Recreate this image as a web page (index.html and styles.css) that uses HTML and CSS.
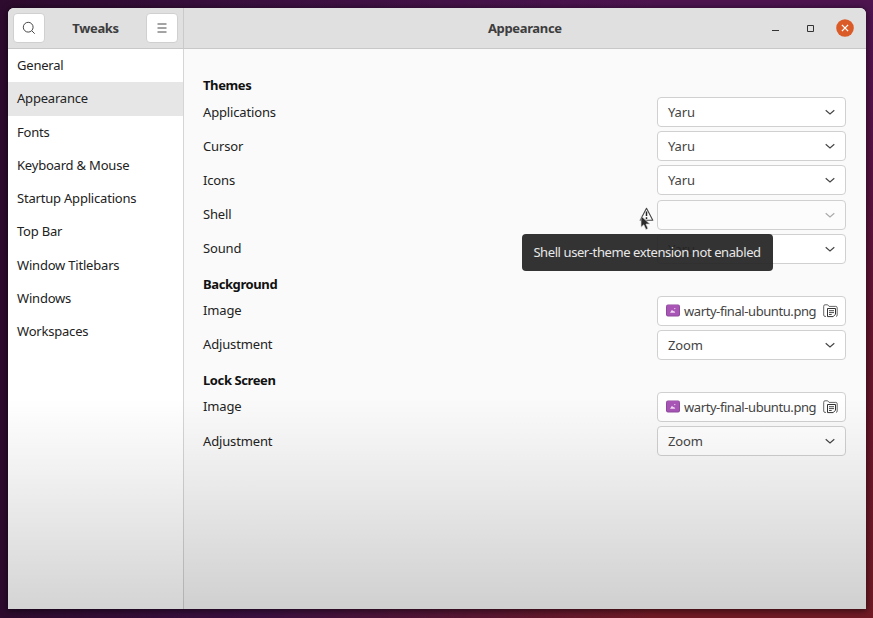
FILE: index.html
```html
<!DOCTYPE html>
<html lang="en">
<head>
<meta charset="utf-8">
<title>Tweaks</title>
<link rel="stylesheet" href="styles.css">
</head>
<body>
<svg class="defs" aria-hidden="true">
  <symbol id="chevron" viewBox="0 0 12 12"><path d="M1.7 4.3 6 8 10.3 4.3" fill="none" stroke="currentColor" stroke-width="1.15"/></symbol>
  <symbol id="picture" viewBox="0 0 14 13"><rect y=".5" width="14" height="12" rx="2" fill="#8d4a9e"/><rect x="1" y="1" width="12" height="10.5" rx="1.2" fill="#a855b5"/><path d="M4 8.8 6 5.8 7.2 7.3 8 6.7 9.3 8.8Z" fill="#f0d9f3"/><circle cx="8.8" cy="4.6" r=".7" fill="#f0d9f3"/></symbol>
  <symbol id="folder" viewBox="0 0 15 14"><path d="M3 12.4H2Q.7 12.4.7 11V2.2Q.7.8 2 .8H4.7L6 2.4H12.8Q14.2 2.4 14.2 3.8V11Q14.2 12.4 13 12.4" fill="none" stroke="#666" stroke-width="1"/><path d="M4.5 4.5H12.5V10.2L10.2 12.6H4.5Z" fill="#fff" stroke="#333" stroke-width="1"/><path d="M6 6.7H11M6 8.6H11M6 10.5H8.7" stroke="#333" stroke-width=".9"/></symbol>
</svg>
<div class="window">
  <header class="titlebar">
    <div class="titlebar-side">
      <button class="tool" aria-label="Search"><svg width="14" height="14" viewBox="0 0 14 14"><circle cx="6.2" cy="6.2" r="4.9"/><path d="m9.8 9.8 2.9 2.9"/></svg></button>
      <span class="title side-title">Tweaks</span>
      <button class="tool" aria-label="Menu"><svg width="14" height="14" viewBox="0 0 14 14"><path d="M2.5 3h9M2.5 7h9M2.5 11h9"/></svg></button>
    </div>
    <div class="titlebar-main">
      <span class="title main-title">Appearance</span>
      <div class="controls">
        <svg width="19" height="19" viewBox="0 0 19 19"><path d="M6 11.5h7" stroke="#333"/></svg>
        <svg width="19" height="19" viewBox="0 0 19 19"><path d="M6.5 6.5h6v6h-6z" fill="none" stroke="#333"/></svg>
        <svg width="18" height="18" viewBox="0 0 18 18"><circle cx="9" cy="9" r="8.8" fill="#db5b28"/><path d="m5.9 5.9 6.2 6.2m0-6.2-6.2 6.2" stroke="#fff" stroke-width="1.3"/></svg>
      </div>
    </div>
  </header>
  <div class="body">
    <nav class="sidebar">
      <a class="item">General</a>
      <a class="item active">Appearance</a>
      <a class="item">Fonts</a>
      <a class="item">Keyboard &amp; Mouse</a>
      <a class="item">Startup Applications</a>
      <a class="item">Top Bar</a>
      <a class="item">Window Titlebars</a>
      <a class="item">Windows</a>
      <a class="item">Workspaces</a>
    </nav>
    <main class="content">
      <h2 class="heading">Themes</h2>
      <section class="rows">
        <div class="row"><span>Applications</span><div class="field">Yaru<svg class="chev"><use href="#chevron"/></svg></div></div>
        <div class="row"><span>Cursor</span><div class="field">Yaru<svg class="chev"><use href="#chevron"/></svg></div></div>
        <div class="row"><span>Icons</span><div class="field">Yaru<svg class="chev"><use href="#chevron"/></svg></div></div>
        <div class="row"><span>Shell</span>
          <div class="warned">
            <div class="warning">
              <svg width="15" height="15" viewBox="0 0 15 15"><path d="M7.5 1.2 13.8 13.3H1.2Z" fill="#fafafa" stroke="#444" stroke-width="1.1" stroke-linejoin="round"/><path d="M7.5 4.5V9M7.5 10.3V12" stroke="#222" stroke-width="1.5"/></svg>
              <svg class="cursor" width="11" height="16" viewBox="0 0 11 16"><path d="M1 .8V12.2L3.8 9.8 5.9 14.6 8 13.6 6 9.1H9.8Z" fill="#2b2b2b" stroke="#ddd" stroke-width=".7"/></svg>
              <div class="tooltip" role="tooltip">Shell user-theme extension not enabled</div>
            </div>
            <div class="field disabled"><svg class="chev"><use href="#chevron"/></svg></div>
          </div>
        </div>
        <div class="row"><span>Sound</span><div class="field">Yaru<svg class="chev"><use href="#chevron"/></svg></div></div>
      </section>
      <h2 class="heading">Background</h2>
      <section class="rows">
        <div class="row"><span>Image</span><div class="field file"><svg class="pic"><use href="#picture"/></svg><span class="filename">warty-final-ubuntu.png</span><svg class="folder"><use href="#folder"/></svg></div></div>
        <div class="row"><span>Adjustment</span><div class="field">Zoom<svg class="chev"><use href="#chevron"/></svg></div></div>
      </section>
      <h2 class="heading">Lock Screen</h2>
      <section class="rows">
        <div class="row"><span>Image</span><div class="field file"><svg class="pic"><use href="#picture"/></svg><span class="filename">warty-final-ubuntu.png</span><svg class="folder"><use href="#folder"/></svg></div></div>
        <div class="row"><span>Adjustment</span><div class="field">Zoom<svg class="chev"><use href="#chevron"/></svg></div></div>
      </section>
    </main>
  </div>
</div>
</body>
</html>
```
FILE: styles.css
```css
* { box-sizing: border-box; }
body {
  margin: 0;
  height: 618px;
  padding: 8px 7.4px 9px 8px;
  overflow: hidden;
  font: 13px/18px "Noto Sans", "Open Sans", sans-serif;
  letter-spacing: -.15px;
  color: #222;
  background:
    linear-gradient(90deg, #2d0b2e 0, #3b1040 30%, transparent 75%),
    linear-gradient(180deg, #4d1450 0, #571340 30%, #65152c 55%, #701b25 100%);
}
.defs { position: absolute; width: 0; height: 0; }
.window {
  position: relative;
  display: flex;
  flex-direction: column;
  height: 601px;
  border-radius: 6px 6px 0 0;
  overflow: hidden;
  background: #fafafa;
}
body::before { content: ""; position: absolute; inset: 8px 7.4px 9px 8px; border-radius: 6px 6px 0 0; box-shadow: 0 1px 6px 1px rgba(0, 0, 0, .5); }
.window::after {
  content: "";
  position: absolute;
  inset: 390px 0 0;
  pointer-events: none;
  background: linear-gradient(rgba(0, 0, 0, 0), rgba(0, 0, 0, .055) 35%, rgba(0, 0, 0, .17));
}
.titlebar { display: flex; height: 41px; background: #e0e0e1; border-bottom: 1px solid #c8c8c8; }
.titlebar-side { display: flex; align-items: center; justify-content: space-between; width: 176px; padding: 0 5px; border-right: 1px solid #cacaca; }
.titlebar-main { flex: 1; display: grid; grid-template-columns: 1fr auto 1fr; align-items: center; }
.title { font-weight: 700; color: #3d3d3d; letter-spacing: -.35px; }
.main-title { grid-column: 2; }
.controls { grid-column: 3; display: flex; align-items: center; justify-content: flex-end; gap: 16px; padding-right: 11.6px; }
.tool { display: grid; place-items: center; width: 32px; height: 30px; padding: 0; border: 1px solid #d0d0d0; border-radius: 4px; background: #fff; }
.tool svg { fill: none; stroke: #484848; stroke-width: 1; }
.body { flex: 1; display: flex; }
.sidebar { width: 176px; background: #fff; border-right: 1px solid #d5d5d5; }
.item { display: flex; align-items: center; height: 33.25px; padding: 0 0 1px 9px; letter-spacing: -.2px; }
.active { background: #e7e6e7; }
.content { flex: 1; padding: 27.8px 19.6px 0 19px; }
.heading { margin: 11.3px 0 2.8px; font-size: 13px; line-height: 18px; font-weight: 700; letter-spacing: -.4px; color: #111; }
.heading:first-child { margin-top: -.5px; }
.rows { display: grid; gap: 4.15px; }
.row { display: flex; align-items: center; justify-content: space-between; height: 30px; }
.row > span { padding-bottom: 1px; }
.field { display: flex; align-items: center; justify-content: space-between; width: 189px; height: 30px; padding: 0 9px 0 10px; border: 1px solid #d0d0d0; border-radius: 4px; background: #fff; color: #444; }
.disabled { justify-content: flex-end; background: #fcfcfd; color: #aaa; }
.file { justify-content: flex-start; padding: 0 0 0 8px; }
.filename { width: 133px; margin: 0 6px 0 4px; letter-spacing: -.42px; white-space: nowrap; }
.chev { width: 12px; height: 12px; }
.pic { width: 14px; height: 13px; flex: none; }
.folder { width: 15px; height: 14px; flex: none; }
.warned { display: flex; align-items: center; gap: 3px; }
.warning { position: relative; display: flex; }
.cursor { position: absolute; left: 1px; top: 8px; z-index: 3; }
.tooltip { position: absolute; left: -117.5px; top: 27px; z-index: 2; width: 251px; height: 37px; border-radius: 4px; background: rgba(36, 36, 36, .93); color: #e8e8e8; line-height: 37px; letter-spacing: -.41px; text-align: center; white-space: nowrap; }
```
